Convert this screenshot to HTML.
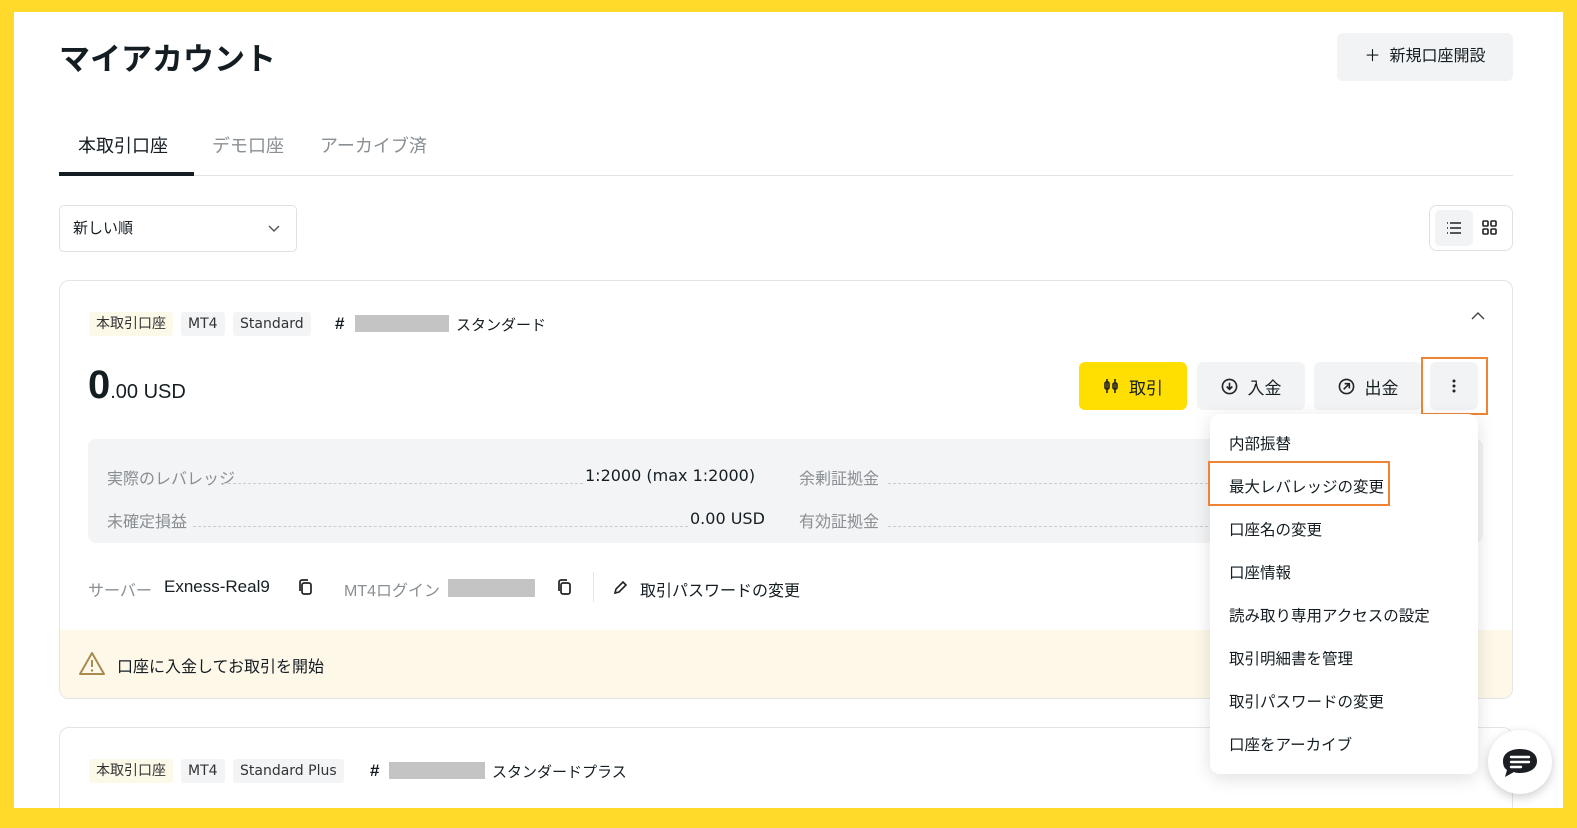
<!DOCTYPE html>
<html><head><meta charset="utf-8"><style>
*{box-sizing:border-box;margin:0;padding:0}
body{width:1577px;height:828px;background:#FFDA2B;position:relative;overflow:hidden;font-family:"Liberation Sans","Noto Sans CJK JP",sans-serif;color:#141d22}
.page{position:absolute;left:14px;top:12px;width:1549px;height:796px;background:#fff;overflow:hidden}
.a{position:absolute;white-space:nowrap}
.tag{position:absolute;height:24px;line-height:24px;font-size:14px;padding:0 7px;border-radius:3px;background:#f3f4f6;color:#333;font-family:"DejaVu Sans","Noto Sans CJK JP",sans-serif}
.btn{position:absolute;height:48px;border-radius:6px;background:#f2f3f5;font-size:17px;display:flex;align-items:center;justify-content:center;gap:10px}
.dot{position:absolute;border-top:1px dashed #ccc}
.menu div{height:43px;line-height:43px;padding-left:19px;font-size:15.5px}
.gray{background:#c4c4c4;position:absolute}
.dv{font-family:"DejaVu Sans",sans-serif}
</style></head><body><div class="page">
<div class="a" style="left:45px;top:22px;font-size:31px;font-weight:bold">マイアカウント</div>
<div class="a" style="left:1323px;top:21px;width:176px;height:48px;background:#f2f3f5;border-radius:6px;font-size:16px;line-height:48px;text-align:center">＋&nbsp; 新規口座開設</div>
<div class="a" style="left:64px;top:120px;font-size:18px">本取引口座</div>
<div class="a" style="left:198px;top:120px;font-size:18px;color:#8a8f93">デモ口座</div>
<div class="a" style="left:306px;top:120px;font-size:18px;color:#8a8f93">アーカイブ済</div>
<div class="a" style="left:45px;top:163px;width:1454px;height:1px;background:#e3e4e6"></div>
<div class="a" style="left:45px;top:160px;width:135px;height:4px;background:#141d22"></div>
<div class="a" style="left:45px;top:193px;width:238px;height:47px;border:1px solid #e0e1e3;border-radius:5px;font-size:15px;line-height:45px;padding-left:13px">新しい順<svg style="position:absolute;right:16px;top:19px" width="12" height="8" viewBox="0 0 12 8"><path d="M1 1l5 5 5-5" fill="none" stroke="#555" stroke-width="1.4"/></svg></div>
<div class="a" style="left:1415px;top:193px;width:84px;height:46px;border:1px solid #e0e1e3;border-radius:8px"><div style="position:absolute;left:5px;top:4px;width:38px;height:36px;background:#f2f3f5;border-radius:5px"></div>
<svg style="position:absolute;left:16px;top:15px" width="16" height="14" viewBox="0 0 16 14"><path d="M1 2h1M1 7h1M1 12h1M4 2h11M4 7h11M4 12h11" stroke="#222" stroke-width="1.6"/></svg>
<svg style="position:absolute;left:52px;top:14px" width="16" height="16" viewBox="0 0 16 16"><rect x="1" y="1" width="5" height="5" rx="1" fill="none" stroke="#222" stroke-width="1.6"/><rect x="9" y="1" width="5" height="5" rx="1" fill="none" stroke="#222" stroke-width="1.6"/><rect x="1" y="9" width="5" height="5" rx="1" fill="none" stroke="#222" stroke-width="1.6"/><rect x="9" y="9" width="5" height="5" rx="1" fill="none" stroke="#222" stroke-width="1.6"/></svg></div>

<div class="a" style="left:45px;top:268px;width:1454px;height:419px;border:1px solid #e3e4e6;border-radius:10px;overflow:hidden">
<div class="tag" style="left:29px;top:31px;background:#fdf9e8">本取引口座</div>
<div class="tag" style="left:121px;top:31px">MT4</div>
<div class="tag" style="left:173px;top:31px">Standard</div>
<div class="a" style="left:275px;top:33px;font-size:17px;font-weight:bold">#</div>
<div class="gray" style="left:295px;top:34px;width:94px;height:17px"></div>
<div class="a" style="left:396px;top:33px;font-size:15px">スタンダード</div>
<svg style="position:absolute;left:1411px;top:30px" width="14" height="9" viewBox="0 0 14 9"><path d="M1 8l6-6 6 6" fill="none" stroke="#444" stroke-width="1.4"/></svg>
<div class="a" style="left:28px;top:82px;font-size:40px;font-weight:bold">0<span style="font-size:20px;font-weight:normal">.00 USD</span></div>
<div class="btn" style="left:1019px;top:81px;width:108px;background:#FFDE02"><svg width="16" height="16" viewBox="0 0 16 16"><path d="M4 1v14M12 1v14" stroke="#222" stroke-width="1.6"/><rect x="2" y="4" width="4" height="7" rx="1.5" fill="none" stroke="#222" stroke-width="1.6"/><rect x="10" y="5" width="4" height="6" rx="1.5" fill="none" stroke="#222" stroke-width="1.6"/></svg>取引</div>
<div class="btn" style="left:1137px;top:81px;width:108px"><svg width="17" height="17" viewBox="0 0 18 18"><circle cx="9" cy="9" r="7.5" fill="none" stroke="#222" stroke-width="1.7"/><path d="M9 5v7M6 9l3 3 3-3" fill="none" stroke="#222" stroke-width="1.7"/></svg>入金</div>
<div class="btn" style="left:1254px;top:81px;width:108px"><svg width="17" height="17" viewBox="0 0 18 18"><circle cx="9" cy="9" r="7.5" fill="none" stroke="#222" stroke-width="1.7"/><path d="M6 12l6-6M7 6h5v5" fill="none" stroke="#222" stroke-width="1.7"/></svg>出金</div>
<div class="btn" style="left:1370px;top:81px;width:48px"><svg width="4" height="14" viewBox="0 0 4 14"><circle cx="2" cy="2" r="1.5" fill="#222"/><circle cx="2" cy="7" r="1.5" fill="#222"/><circle cx="2" cy="12" r="1.5" fill="#222"/></svg></div>
<div class="a" style="left:1361px;top:76px;width:67px;height:58px;border:2px solid #EE8434"></div>
<div class="a" style="left:28px;top:158px;width:1395px;height:104px;background:#f3f4f6;border-radius:8px">
<div class="a" style="left:19px;top:26px;font-size:16px;color:#8a8f93">実際のレバレッジ</div>
<div class="dot" style="left:135px;top:44px;width:360px"></div>
<div class="a dv" style="left:497px;top:27px;font-size:16px">1:2000 (max 1:2000)</div>
<div class="a" style="left:711px;top:26px;font-size:16px;color:#8a8f93">余剰証拠金</div>
<div class="dot" style="left:800px;top:44px;width:330px"></div>
<div class="a" style="left:19px;top:69px;font-size:16px;color:#8a8f93">未確定損益</div>
<div class="dot" style="left:105px;top:87px;width:495px"></div>
<div class="a dv" style="left:602px;top:70px;font-size:16px">0.00 USD</div>
<div class="a" style="left:711px;top:69px;font-size:16px;color:#8a8f93">有効証拠金</div>
<div class="dot" style="left:800px;top:87px;width:330px"></div>
</div>
<div class="a" style="left:28px;top:296px;font-size:16px;color:#8a8f93">サーバー</div>
<div class="a" style="left:104px;top:296px;font-size:17px">Exness-Real9</div>
<svg style="position:absolute;left:238px;top:298px" width="15" height="17" viewBox="0 0 15 17"><rect x="4" y="4" width="9" height="11" rx="2" fill="none" stroke="#222" stroke-width="1.7"/><path d="M2 12V3a2 2 0 0 1 2-2h6" fill="none" stroke="#222" stroke-width="1.7"/></svg>
<div class="a" style="left:284px;top:296px;font-size:16px;color:#8a8f93">MT4ログイン</div>
<div class="gray" style="left:388px;top:298px;width:87px;height:18px"></div>
<svg style="position:absolute;left:497px;top:298px" width="15" height="17" viewBox="0 0 15 17"><rect x="4" y="4" width="9" height="11" rx="2" fill="none" stroke="#222" stroke-width="1.7"/><path d="M2 12V3a2 2 0 0 1 2-2h6" fill="none" stroke="#222" stroke-width="1.7"/></svg>
<div class="a" style="left:533px;top:291px;width:1px;height:30px;background:#e3e4e6"></div>
<svg style="position:absolute;left:553px;top:299px" width="15" height="15" viewBox="0 0 15 15"><path d="M2 13l1-4 7-7 3 3-7 7z" fill="none" stroke="#222" stroke-width="1.6"/></svg>
<div class="a" style="left:580px;top:296px;font-size:16px">取引パスワードの変更</div>
<div class="a" style="left:0;top:349px;width:1462px;height:70px;background:#fef8e9">
<svg style="position:absolute;left:18px;top:21px" width="28" height="25" viewBox="0 0 28 25"><path d="M14 2L26 23H2z" fill="none" stroke="#a88b4e" stroke-width="2" stroke-linejoin="round"/><path d="M14 9v7" stroke="#a88b4e" stroke-width="2"/><circle cx="14" cy="19.5" r="1.2" fill="#a88b4e"/></svg>
<div class="a" style="left:57px;top:23px;font-size:16px">口座に入金してお取引を開始</div>
</div>
</div>

<div class="a" style="left:45px;top:715px;width:1454px;height:120px;border:1px solid #e3e4e6;border-radius:10px">
<div class="tag" style="left:29px;top:31px;background:#fdf9e8">本取引口座</div>
<div class="tag" style="left:121px;top:31px">MT4</div>
<div class="tag" style="left:173px;top:31px">Standard Plus</div>
<div class="a" style="left:310px;top:33px;font-size:17px;font-weight:bold">#</div>
<div class="gray" style="left:329px;top:34px;width:96px;height:17px"></div>
<div class="a" style="left:432px;top:33px;font-size:15px">スタンダードプラス</div>
</div>

<div class="a menu" style="left:1196px;top:402px;width:268px;height:360px;background:#fff;border-radius:10px;box-shadow:0 4px 18px rgba(0,0,0,.13);padding-top:9px">
<div>内部振替</div><div>最大レバレッジの変更</div><div>口座名の変更</div><div>口座情報</div><div>読み取り専用アクセスの設定</div><div>取引明細書を管理</div><div>取引パスワードの変更</div><div>口座をアーカイブ</div>
</div>
<div class="a" style="left:1194px;top:449px;width:182px;height:45px;border:2px solid #EE8434"></div>
<div class="a" style="left:1474px;top:718px;width:64px;height:64px;border-radius:50%;background:#fff;box-shadow:0 3px 10px rgba(0,0,0,.2)">
<svg style="position:absolute;left:14px;top:18px" width="36" height="32" viewBox="0 0 36 32"><path d="M18 1C27 1 35 5 35 13s-8 12-17 12c-2 0-4 0-6-1L3 29l2-7C2 20 1 17 1 13 1 5 9 1 18 1z" fill="#1b1f24"/><path d="M9 9h18M9 14h18M9 19h10" stroke="#fff" stroke-width="2.4" stroke-linecap="round"/></svg></div>
</div></body></html>
